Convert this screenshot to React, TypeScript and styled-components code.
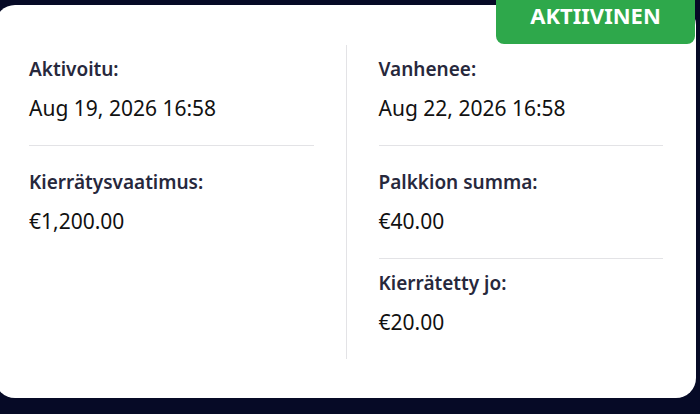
import styled, { createGlobalStyle } from 'styled-components';

const GlobalStyle = createGlobalStyle`
  html, body {
    margin: 0;
    padding: 0;
    background-color: #060a26;
    overflow: hidden;
  }
  body {
    font-family: 'Noto Sans', 'Open Sans', sans-serif;
  }
`;

type Detail = { label: string; value: string };

const leftDetails: Detail[] = [
  { label: 'Aktivoitu:', value: 'Aug 19, 2026 16:58' },
  { label: 'Kierrätysvaatimus:', value: '€1,200.00' }
];

const rightDetails: Detail[] = [
  { label: 'Vanhenee:', value: 'Aug 22, 2026 16:58' },
  { label: 'Palkkion summa:', value: '€40.00' },
  { label: 'Kierrätetty jo:', value: '€20.00' }
];

const App: React.FC = () => {
  const renderColumn = (details: Detail[]) =>
    details.map((d, i) => (
      <Item key={d.label} $spacious={i === 1} $last={i === details.length - 1}>
        <Label>{d.label}</Label>
        <Value>{d.value}</Value>
      </Item>
    ));

  return (
    <>
      <GlobalStyle />
      <Page>
        <Card>
          <StatusBadge>AKTIIVINEN</StatusBadge>
          <Column>{renderColumn(leftDetails)}</Column>
          <Separator />
          <Column>{renderColumn(rightDetails)}</Column>
        </Card>
      </Page>
    </>
  );
};

export default App;

const Page = styled.div`
  width: 700px;
  height: 414px;
  padding-top: 5px;
  box-sizing: border-box;
`;

const Card = styled.div`
  position: relative;
  margin-left: -5px;
  width: 701px;
  height: 393px;
  box-sizing: border-box;
  padding: 40px 33px 40px 34px;
  background-color: #ffffff;
  border-radius: 20px;
  display: grid;
  grid-template-columns: 1fr 1px 1fr;
  column-gap: 32px;
`;

const StatusBadge = styled.div`
  position: absolute;
  top: -5px;
  right: 1px;
  width: 199px;
  height: 44px;
  box-sizing: border-box;
  padding-top: 2px;
  background-color: #2ea84b;
  border-radius: 0 0 8px 8px;
  color: #ffffff;
  font-size: 22px;
  font-weight: 700;
  line-height: 26px;
  text-align: center;
`;

const Column = styled.div`
  display: flex;
  flex-direction: column;
`;

const Separator = styled.div`
  background-color: #e3e3e6;
`;

const Item = styled.div<{ $spacious?: boolean; $last?: boolean }>`
  display: flex;
  flex-direction: column;
  gap: 14px;
  padding: ${(p) => (p.$spacious ? '24px' : '12px')} 0 24px;
  border-bottom: ${(p) => (p.$last ? 'none' : '1px solid #e3e3e6')};
`;

const Label = styled.div`
  color: #27283c;
  font-size: 19px;
  font-weight: 600;
  line-height: 24px;
`;

const Value = styled.div`
  color: #111111;
  font-size: 21px;
  font-weight: 400;
  line-height: 26px;
`;
